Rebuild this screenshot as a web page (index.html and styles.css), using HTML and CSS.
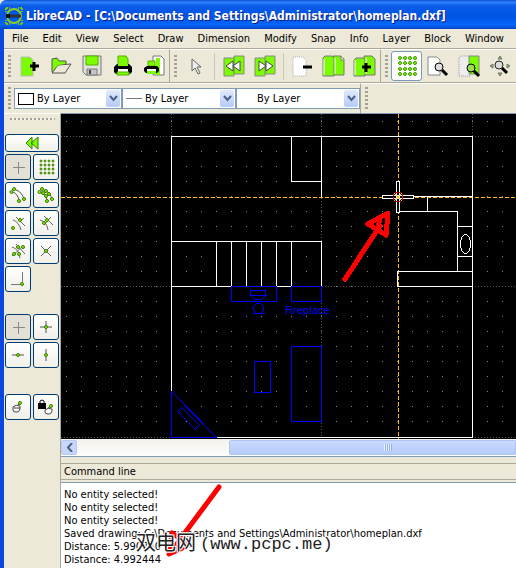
FILE: index.html
```html
<!DOCTYPE html>
<html lang="en">
<head>
    <meta charset="UTF-8">
    <meta name="viewport" content="width=device-width, initial-scale=1.0">
    <title>LibreCAD - [homeplan.dxf]</title>
    <link rel="stylesheet" href="styles.css">
</head>
<body>
    <header class="titlebar">
        <svg class="logo" width="18" height="18" viewBox="0 0 18 18">
            <path d="M1 1v4M1 1h4M17 1v4M17 1h-4M1 17v-4M1 17h4M17 17v-4M17 17h-4" stroke="#7cbd1c" stroke-width="2" stroke-dasharray="2 1"/>
            <circle cx="9" cy="9" r="7" fill="none" stroke="#8fce20" stroke-width="2"/>
            <path d="M1 9h15" stroke="#333" stroke-width="3"/>
            <path d="M1 9h4" stroke="#111" stroke-width="4"/>
        </svg>
        <h1>LibreCAD - [C:\Documents and Settings\Administrator\homeplan.dxf]</h1>
    </header>

    <div class="window">
        <nav class="menu">
            <button>File</button>
            <button>Edit</button>
            <button>View</button>
            <button>Select</button>
            <button>Draw</button>
            <button>Dimension</button>
            <button>Modify</button>
            <button>Snap</button>
            <button>Info</button>
            <button>Layer</button>
            <button>Block</button>
            <button>Window</button>
        </nav>

        <div class="toolbars">
            <div class="toolbar">
                <span class="handle"></span>
                <button class="tool" aria-label="New">
                    <svg width="22" height="22" viewBox="0 0 22 22">
                        <path d="M2 2h9l3 3v16H2z" fill="#7cfc00" stroke="#bbb"/>
                        <path d="M11 11h9M15 7v9" stroke="#000" stroke-width="3"/>
                    </svg>
                </button>
                <button class="tool" aria-label="Open">
                    <svg width="22" height="22" viewBox="0 0 22 22">
                        <path d="M2 17V4l5-1 2 3h7v4" fill="#7cfc00" stroke="#555"/>
                        <path d="M2 18l6-8 13-1-6 9z" fill="#ece9d8" stroke="#555"/>
                        <path d="M3 15V5l4-1 2 3h6v2l-7 1z" fill="#7cfc00"/>
                    </svg>
                </button>
                <button class="tool" aria-label="Save">
                    <svg width="22" height="22" viewBox="0 0 22 22">
                        <path d="M2 1h18v19H5l-3-3z" fill="#e2e2dc" stroke="#777"/>
                        <path d="M5 1h12v9H5z" fill="#7cfc00" stroke="#55ad00"/>
                        <path d="M6 14h10v6H6z" fill="#c5c5c5" stroke="#777"/>
                        <path d="M9 15v4" stroke="#444" stroke-width="2"/>
                    </svg>
                </button>
                <button class="tool" aria-label="Print">
                    <svg width="22" height="22" viewBox="0 0 22 22">
                        <path d="M6 1h8l2 3v6H6z" fill="#7cfc00" stroke="#55ad00"/>
                        <path d="M5 9h12l3 3v5l-2 2H4l-2-2v-5z" fill="#000"/>
                        <path d="M6 9h10v2H6z" fill="#7cfc00"/>
                        <path d="M6 14h10v3H6z" fill="#fff"/>
                        <path d="M5 17h12v3H5z" fill="#7cfc00" stroke="#55ad00"/>
                    </svg>
                </button>
                <button class="tool" aria-label="Print preview">
                    <svg width="22" height="22" viewBox="0 0 22 22">
                        <path d="M10 1h8l3 3v16H10z" fill="#fff" stroke="#777"/>
                        <path d="M13 3h4v17h-4z" fill="#7cfc00"/>
                        <path d="M5 6h7v5H5z" fill="#7cfc00" stroke="#55ad00"/>
                        <path d="M4 11h10l2 2v3l-2 2H3l-2-2v-3z" fill="#000"/>
                        <path d="M4 14h9v2H4z" fill="#fff"/>
                        <path d="M4 16h9v3H4z" fill="#7cfc00"/>
                    </svg>
                </button>
            </div>

            <div class="toolbar">
                <span class="handle"></span>
                <button class="tool" aria-label="Selection pointer">
                    <svg width="22" height="22" viewBox="0 0 22 22">
                        <path d="M7 4v12l3-3 3 6 2-1-3-6h4z" fill="#eee" stroke="#666"/>
                    </svg>
                </button>
                <span class="divider"></span>
                <button class="tool" aria-label="Undo">
                    <svg width="24" height="24" viewBox="0 0 24 24">
                        <path d="M12 2h10v18H12z" fill="#7cfc00" stroke="#888"/>
                        <path d="M2 4h10v18H2z" fill="#7cfc00" stroke="#888"/>
                        <path d="M11 7v10l-7-5zM18 7v10l-7-5z" fill="#fff" stroke="#444"/>
                    </svg>
                </button>
                <button class="tool" aria-label="Redo">
                    <svg width="24" height="24" viewBox="0 0 24 24">
                        <path d="M12 2h10v18H12z" fill="#7cfc00" stroke="#888"/>
                        <path d="M2 4h10v18H2z" fill="#7cfc00" stroke="#888"/>
                        <path d="M6 7v10l7-5zM13 7v10l7-5z" fill="#fff" stroke="#444"/>
                    </svg>
                </button>
                <span class="divider"></span>
                <button class="tool" aria-label="Cut">
                    <svg width="22" height="22" viewBox="0 0 22 22">
                        <path d="M1 2h10l3 3v16H1z" fill="#fff" stroke="#aaa" stroke-dasharray="1 1"/>
                        <path d="M11 12h9" stroke="#000" stroke-width="3"/>
                    </svg>
                </button>
                <button class="tool" aria-label="Copy">
                    <svg width="24" height="24" viewBox="0 0 24 24">
                        <path d="M11 2h8l3 3v16H11z" fill="#7cfc00" stroke="#777"/>
                        <path d="M1 4l2-2h7l2 2v18H1z" fill="#7cfc00" stroke="#777"/>
                        <path d="M13 4v16M2 5v16" stroke="#fff"/>
                        <path d="M19 2v4h3" fill="#fff" stroke="#777"/>
                    </svg>
                </button>
                <button class="tool" aria-label="Paste">
                    <svg width="24" height="24" viewBox="0 0 24 24">
                        <path d="M11 2h8l3 3v16H11z" fill="#7cfc00" stroke="#777"/>
                        <path d="M1 6l2-2h7l2 2v16H1z" fill="#7cfc00" stroke="#777"/>
                        <path d="M13 4v16M2 6v15" stroke="#fff"/>
                        <path d="M9 13h9M13 9v9" stroke="#000" stroke-width="3"/>
                    </svg>
                </button>
            </div>

            <div class="toolbar">
                <span class="handle"></span>
                <button class="tool checked" aria-label="Grid">
                    <svg width="20" height="22" viewBox="0 0 20 22" fill="#7cfc00" stroke="#3c9800">
                        <circle cx="3" cy="3" r="1.5"/><circle cx="8" cy="3" r="1.5"/><circle cx="13" cy="3" r="1.5"/><circle cx="18" cy="3" r="1.5"/>
                        <circle cx="3" cy="8" r="1.5"/><circle cx="8" cy="8" r="1.5"/><circle cx="13" cy="8" r="1.5"/><circle cx="18" cy="8" r="1.5"/>
                        <circle cx="3" cy="14" r="1.5"/><circle cx="8" cy="14" r="1.5"/><circle cx="13" cy="14" r="1.5"/><circle cx="18" cy="14" r="1.5"/>
                        <circle cx="3" cy="19" r="1.5"/><circle cx="8" cy="19" r="1.5"/><circle cx="13" cy="19" r="1.5"/><circle cx="18" cy="19" r="1.5"/>
                    </svg>
                </button>
                <button class="tool" aria-label="Redraw">
                    <svg width="22" height="22" viewBox="0 0 22 22">
                        <path d="M1 2h9l3 3v15H1z" fill="#fff" stroke="#888"/>
                        <circle cx="12" cy="12" r="4" fill="#ddd" stroke="#000"/>
                        <path d="M15 15l5 5" stroke="#000" stroke-width="3"/>
                    </svg>
                </button>
                <button class="tool" aria-label="Zoom page">
                    <svg width="24" height="24" viewBox="0 0 24 24">
                        <path d="M2 4l2-2h9v20H2z" fill="#eee" stroke="#999" stroke-dasharray="1 1"/>
                        <path d="M12 2h10v18H12z" fill="#7cfc00" stroke="#888"/>
                        <circle cx="14" cy="14" r="4" fill="#9d5" stroke="#000"/>
                        <path d="M17 17l5 5" stroke="#000" stroke-width="3"/>
                    </svg>
                </button>
                <button class="tool" aria-label="Auto zoom">
                    <svg width="22" height="22" viewBox="0 0 22 22">
                        <circle cx="10" cy="10" r="4" fill="#ddd" stroke="#222"/>
                        <path d="M13 13l5 5" stroke="#000" stroke-width="3"/>
                        <path d="M11 1l2 3H9zM11 21l2-3H9zM1 11l3-2v4zM21 11l-3-2v4z" fill="#7cbd30" stroke="#777"/>
                    </svg>
                </button>
            </div>
        </div>

        <div class="toolbars pens">
            <div class="toolbar">
                <span class="handle"></span>
                <label class="combo color">
                    <span class="swatch"></span>
                    <select aria-label="Color"><option>By Layer</option></select>
                    <span class="arrow"><svg width="9" height="7" viewBox="0 0 9 7"><path d="M1 1l3.500 4L8 1" fill="none" stroke="#4d6185" stroke-width="2"/></svg></span>
                </label>
                <label class="combo width">
                    <span class="stroke"></span>
                    <select aria-label="Line width"><option>By Layer</option></select>
                    <span class="arrow"><svg width="9" height="7" viewBox="0 0 9 7"><path d="M1 1l3.500 4L8 1" fill="none" stroke="#4d6185" stroke-width="2"/></svg></span>
                </label>
                <label class="combo type">
                    <select aria-label="Line type"><option>By Layer</option></select>
                    <span class="arrow"><svg width="9" height="7" viewBox="0 0 9 7"><path d="M1 1l3.500 4L8 1" fill="none" stroke="#4d6185" stroke-width="2"/></svg></span>
                </label>
            </div>
            <div class="toolbar">
                <span class="handle"></span>
            </div>
        </div>

        <div class="main">
            <aside class="dock">
                <span class="handle across"></span>
                <button class="snap back" aria-label="Back">
                    <svg width="14" height="14" viewBox="0 0 14 14">
                        <path d="M7 1v12L1 7zM13 1v12L6 7z" fill="#7cfc00" stroke="#3a7a10"/>
                    </svg>
                </button>
                <div class="snaps">
                    <button class="snap pressed" aria-label="Free snap">
                        <svg width="18" height="18" viewBox="0 0 18 18"><path d="M9.500 4v12M4 9.500h12" stroke="#888"/></svg>
                    </button>
                    <button class="snap" aria-label="Snap to grid">
                        <svg width="18" height="18" viewBox="0 0 18 18" fill="#7cfc00" stroke="#3c7800">
                            <circle cx="4" cy="3" r="1"/><circle cx="8" cy="3" r="1"/><circle cx="12" cy="3" r="1"/><circle cx="16" cy="3" r="1"/>
                            <circle cx="4" cy="7" r="1"/><circle cx="8" cy="7" r="1"/><circle cx="12" cy="7" r="1"/><circle cx="16" cy="7" r="1"/>
                            <circle cx="4" cy="11" r="1"/><circle cx="8" cy="11" r="1"/><circle cx="12" cy="11" r="1"/><circle cx="16" cy="11" r="1"/>
                            <circle cx="4" cy="15" r="1"/><circle cx="8" cy="15" r="1"/><circle cx="12" cy="15" r="1"/><circle cx="16" cy="15" r="1"/>
                        </svg>
                    </button>
                    <button class="snap" aria-label="Snap to endpoints">
                        <svg width="18" height="18" viewBox="0 0 18 18">
                            <path d="M5 3q9 3 10 11M3 6q6 1 7 9" fill="none" stroke="#555"/>
                            <g fill="#7cfc00" stroke="#3c7800"><circle cx="5" cy="3" r="1.500"/><circle cx="2.500" cy="6" r="1.500"/><circle cx="10" cy="15" r="1.500"/><circle cx="15" cy="13" r="1.500"/></g>
                        </svg>
                    </button>
                    <button class="snap" aria-label="Snap on entity">
                        <svg width="18" height="18" viewBox="0 0 18 18">
                            <path d="M5 3q9 3 10 11M3 6q6 1 7 9" fill="none" stroke="#555"/>
                            <g fill="#7cfc00" stroke="#3c7800"><circle cx="5" cy="3" r="1.500"/><circle cx="2.500" cy="6" r="1.500"/><circle cx="6" cy="7" r="1.500"/><circle cx="9" cy="5" r="1.500"/><circle cx="9" cy="10" r="1.500"/><circle cx="12" cy="8" r="1.500"/><circle cx="10" cy="15" r="1.500"/><circle cx="15" cy="13" r="1.500"/></g>
                        </svg>
                    </button>
                    <button class="snap" aria-label="Snap to center">
                        <svg width="18" height="18" viewBox="0 0 18 18">
                            <path d="M7 3l9 9M4 6q6 2 8 10M10 8l5-4" fill="none" stroke="#666"/>
                            <g fill="#7cfc00" stroke="#3c7800"><circle cx="11" cy="6" r="1.500"/><circle cx="4" cy="14" r="1.500"/></g>
                        </svg>
                    </button>
                    <button class="snap" aria-label="Snap to middle">
                        <svg width="18" height="18" viewBox="0 0 18 18">
                            <path d="M7 2l9 9M3 6q7 2 8 10M7 11l7-8" fill="none" stroke="#666"/>
                            <g fill="#7cfc00" stroke="#3c7800"><circle cx="10" cy="6" r="1.500"/><circle cx="7" cy="9" r="1.500"/></g>
                        </svg>
                    </button>
                    <button class="snap" aria-label="Snap to distance">
                        <svg width="18" height="18" viewBox="0 0 18 18">
                            <path d="M3 5q7 2 8 11M7 2l9 10M3 14L14 4" fill="none" stroke="#666"/>
                            <g fill="#7cfc00" stroke="#3c7800"><circle cx="9" cy="5" r="1.500"/><circle cx="14" cy="5" r="1.500"/><circle cx="5" cy="12" r="1.500"/><circle cx="10" cy="12" r="1.500"/></g>
                        </svg>
                    </button>
                    <button class="snap" aria-label="Snap to intersection">
                        <svg width="18" height="18" viewBox="0 0 18 18">
                            <path d="M4 4l10 10M14 4L4 14" stroke="#666"/>
                            <circle cx="9" cy="9" r="1.500" fill="#7cfc00" stroke="#3c7800"/>
                        </svg>
                    </button>
                    <button class="snap" aria-label="Snap to corner">
                        <svg width="18" height="18" viewBox="0 0 18 18">
                            <path d="M2 14.500h9M13.500 2v10" stroke="#777"/>
                            <circle cx="13" cy="14" r="1.500" fill="#7cfc00" stroke="#3c7800"/>
                        </svg>
                    </button>
                </div>
                <div class="snaps">
                    <button class="snap pressed" aria-label="Restrict nothing">
                        <svg width="18" height="18" viewBox="0 0 18 18"><path d="M9.500 4v12M4 9.500h12" stroke="#888"/></svg>
                    </button>
                    <button class="snap" aria-label="Restrict orthogonal">
                        <svg width="18" height="18" viewBox="0 0 18 18">
                            <path d="M9 3v12M3 9h12" stroke="#555"/>
                            <circle cx="9" cy="9" r="1.500" fill="#7cfc00" stroke="#3c7800"/>
                        </svg>
                    </button>
                    <button class="snap" aria-label="Restrict horizontal">
                        <svg width="18" height="18" viewBox="0 0 18 18">
                            <path d="M3 9h12" stroke="#555"/>
                            <circle cx="9" cy="9" r="1.500" fill="#7cfc00" stroke="#3c7800"/>
                        </svg>
                    </button>
                    <button class="snap" aria-label="Restrict vertical">
                        <svg width="18" height="18" viewBox="0 0 18 18">
                            <path d="M9 3v12" stroke="#555"/>
                            <circle cx="9" cy="9" r="1.500" fill="#7cfc00" stroke="#3c7800"/>
                        </svg>
                    </button>
                </div>
                <div class="snaps">
                    <button class="snap" aria-label="Set relative zero">
                        <svg width="18" height="18" viewBox="0 0 18 18">
                            <path d="M4 9q3-3 7-1v3q-1 4-4 3-3 0-3-2zM8 8l3-3M5 10h6" fill="#fff" stroke="#444"/>
                            <circle cx="11" cy="5" r="1.500" fill="#7cfc00" stroke="#3c7800"/>
                        </svg>
                    </button>
                    <button class="snap" aria-label="Lock relative zero">
                        <svg width="18" height="18" viewBox="0 0 18 18">
                            <path d="M3 6V3q2-2 4 0v3" fill="none" stroke="#000"/>
                            <path d="M1 5h8v6H1z"/>
                            <path d="M8 12q3-3 7-1v2q-1 4-4 3-3 0-3-2zM11 10l3-2" fill="#fff" stroke="#444"/>
                            <circle cx="14" cy="8" r="1.500" fill="#7cfc00" stroke="#3c7800"/>
                        </svg>
                    </button>
                </div>
            </aside>

            <div class="work">
                <div class="canvas">
                    <svg class="drawing" width="100%" height="100%" shape-rendering="crispEdges">
                        <defs>
                            <pattern id="gridLeft" x="5" y="7" width="15" height="15" patternUnits="userSpaceOnUse">
                                <path d="M0 0h1v1H0z" fill="#888"/>
                            </pattern>
                            <pattern id="gridRight" x="6" y="7" width="15" height="15" patternUnits="userSpaceOnUse">
                                <path d="M0 0h1v1H0z" fill="#888"/>
                            </pattern>
                        </defs>
                        <rect width="300" height="320" fill="url(#gridLeft)"/>
                        <rect x="300" width="100%" height="320" fill="url(#gridRight)"/>
                        
                        <g transform="translate(-61 -114)" fill="none">
                            <path d="M171.500 114v324M321.500 114v324M472.500 114v324M61 136.500h1000M61 286.500h1000M61 437.500h1000" stroke="#555" stroke-dasharray="1 2"/>
                            <path d="M61 197.500h2000M398.500 114v1000" stroke="#ffbf00" stroke-dasharray="4 2"/>
                            <g stroke="#fff">
                                <path d="M171.500 391V136.500h301v301H216"/>
                                <path d="M291.500 136v45.500h30M321.500 136v61"/>
                                <path d="M171 241.500h150.500v45M171 286.500h151M216.500 241v45M231.500 241v45M246.500 241v45M261.500 241v45M276.500 241v45M291.500 241v45"/>
                                <path d="M414 196.500h58M427.500 197v14M400 211.500h57.500v60M457 226.500h15M457 256.500h15M472 271.500h-74.500v15h75"/>
                                <ellipse cx="465.500" cy="244" rx="5" ry="9.500"/>
                            </g>
                            <g stroke="#00f">
                                <path d="M231.500 286.500h45v15h-45zM291.500 286.500h30v15h-30z"/>
                                <path d="M250.500 290.500h15v5l-4 4h-7l-4-4zM250 295.500h17"/>
                                <path d="M256.500 303.500h4l3 3v4l-3 3h-4l-3-3v-4zM253 313.500h12"/>
                                <path d="M254.500 361.500h16v31h-16zM291.500 346.500h30v75h-30z"/>
                                <path d="M171.500 391.500v46h45zM177.500 411.500l4-4 18 18-4 4z"/>
                            </g>
                            <text class="note" x="285" y="314">Fireplace</text>
                            <g fill="#000" stroke="#fff">
                                <path d="M382.500 195.500h31v3h-31zM396.500 181.500h3v31h-3z"/>
                            </g>
                            <circle cx="398" cy="197" r="5" stroke="#e00" stroke-dasharray="3 1"/>
                            <path d="M394 193l8 8M402 193l-8 8" stroke="#ffbf00"/>
                            <path d="M345 279l35-53M388 213l-20 11 18 11zM380 220l-3 9" stroke="#f00" stroke-width="5" stroke-linecap="round" stroke-linejoin="round"/>
                        </g>
                    </svg>
                </div>
                <div class="scrollbar">
                    <button class="scroll-left" aria-label="Scroll left">
                        <svg width="7" height="9" viewBox="0 0 7 9"><path d="M6 0L2 4.500 6 9" fill="none" stroke="#4d6185" stroke-width="2"/></svg>
                    </button>
                    <div class="thumb"><span class="grip"></span></div>
                </div>

                <section class="command">
                    <h2><label for="log">Command line</label></h2>
                    <textarea id="log" rows="6" readonly>No entity selected!
No entity selected!
No entity selected!
Saved drawing: C:\Documents and Settings\Administrator\homeplan.dxf
Distance: 5.990740
Distance: 4.992444</textarea>
                    <svg class="pointer" width="64" height="80" viewBox="0 0 64 80">
                        <path d="M58 5L20 56M11 51l-3 21 20-9zM12 68l8-12" fill="none" stroke="#f00" stroke-width="5" stroke-linecap="round" stroke-linejoin="round"/>
                    </svg>
                    <p class="site"><span lang="zh">双电网</span>(www.pcpc.me)</p>
                </section>
            </div>
        </div>
    </div>
</body>
</html>
```

FILE: styles.css
```css
* {
    box-sizing: border-box;
}
body {
    margin: 0;
    height: 100vh;
    display: flex;
    flex-direction: column;
    overflow: hidden;
    background-color: #ece9d8;
    font-family: "DejaVu Sans Condensed", "Noto Sans", sans-serif;
    font-size: 11px;
    color: #000;
}
button, select, textarea {
    font: inherit;
    color: inherit;
    margin: 0;
    padding: 0;
    border: none;
    background: none;
}
svg {
    display: block;
    flex-shrink: 0;
}

/* title */
.titlebar {
    height: 29px;
    flex-shrink: 0;
    display: flex;
    align-items: center;
    gap: 3px;
    padding: 2px 5px 0;
    border-top-left-radius: 6px;
    background: linear-gradient(#0a4fd0 0, #2c83fb 8%, #0a5be8 20%, #0055e5 60%, #0566fa 85%, #0043c8 100%);
}
.titlebar h1 {
    margin: 0;
    font-size: 12px;
    font-weight: bold;
    color: #fff;
    white-space: nowrap;
    text-shadow: 1px 1px 0 #0a1883;
}
.window {
    flex: 1;
    min-height: 0;
    display: flex;
    flex-direction: column;
    border-left: 4px solid #0a46e0;
}

/* menu */
.menu {
    display: flex;
    height: 20px;
    flex-shrink: 0;
    padding-left: 1px;
    border-bottom: 1px solid #aca899;
}
.menu button {
    padding: 0 7px;
    white-space: nowrap;
}

/* toolbars */
.toolbars {
    display: flex;
    height: 34px;
    flex-shrink: 0;
    border-bottom: 1px solid #aca899;
}
.toolbars.pens {
    height: 30px;
    border-bottom: none;
}
.toolbar {
    display: flex;
    align-items: center;
    flex-shrink: 0;
    padding-left: 4px;
    border-top: 1px solid #fff;
    border-right: 1px solid #aca899;
}
.toolbar:last-child {
    flex: 1;
    border-right: none;
}
.handle {
    width: 3px;
    height: 23px;
    margin-right: 3px;
    background: repeating-linear-gradient(#a5a293 0 2px, #ece9d8 2px 4px);
}
.handle.across {
    width: auto;
    height: 2px;
    margin: 4px 5px 14px;
    background: repeating-linear-gradient(90deg, #a5a293 0 2px, #f6f4ec 2px 4px);
}
.tool {
    width: 31px;
    height: 30px;
    display: flex;
    align-items: center;
    justify-content: center;
}
.tool.checked {
    background-color: #fff;
    border: 1px solid #7b98bb;
    border-radius: 3px;
}
.divider {
    width: 1px;
    height: 27px;
    margin: 0 3px;
    background-color: #cbc7b8;
}
.combo {
    display: flex;
    align-items: center;
    gap: 3px;
    height: 21px;
    padding: 1px 1px 1px 3px;
    border: 1px solid #7f9db9;
    background-color: #fff;
}
.combo select {
    flex: 1;
    appearance: none;
    outline: none;
}
.combo.color {
    width: 108px;
}
.combo.width {
    width: 114px;
}
.combo.type {
    width: 124px;
    padding-left: 20px;
}
.swatch {
    width: 16px;
    height: 12px;
    border: 1px solid #000;
}
.stroke {
    width: 16px;
    height: 1px;
    background-color: #777;
}
.arrow {
    display: flex;
    align-items: center;
    justify-content: center;
    width: 14px;
    height: 17px;
    border-radius: 2px;
    background: linear-gradient(#e1eafe, #b4caf7);
}

/* snap dock */
.main {
    flex: 1;
    min-height: 0;
    display: flex;
}
.dock {
    width: 56px;
    flex-shrink: 0;
    padding-left: 1px;
    display: flex;
    flex-direction: column;
    border-top: 1px solid #fff;
}
.snap {
    height: 26px;
    display: flex;
    align-items: center;
    justify-content: center;
    border: 1px solid #003c74;
    border-radius: 3px;
    background: linear-gradient(#fff, #f0efe8);
}
.snap.back {
    height: 18px;
    margin: 0 1px 2px 0;
}
.snap.pressed {
    background: #e3e1d6;
}
.snaps {
    display: grid;
    grid-template-columns: 26px 26px;
    gap: 2px;
    margin-bottom: 22px;
}
.snaps + .snaps {
    margin-bottom: 26px;
}

/* drawing area */
.work {
    flex: 1;
    min-width: 0;
    display: flex;
    flex-direction: column;
    border-left: 1px solid #aca899;
}
.canvas {
    flex: 1;
    min-height: 0;
    border-top: 1px solid #7f9db9;
    background-color: #000;
    overflow: hidden;
}
.note {
    fill: #00f;
    font-family: "DejaVu Sans", sans-serif;
    font-size: 10px;
}
.scrollbar {
    display: flex;
    height: 18px;
    flex-shrink: 0;
    padding: 1px 0;
    background: linear-gradient(#f3f1ec, #fefefb);
    border-bottom: 1px solid #7f9db9;
}
.scroll-left {
    width: 16px;
    display: flex;
    align-items: center;
    justify-content: center;
    border: 1px solid #b4c8f0;
    border-radius: 2px;
    background-color: #c8d6fb;
}
.thumb {
    flex: 1;
    margin-left: 152px;
    padding-left: 154px;
    display: flex;
    align-items: center;
    border: 1px solid #b0c4f4;
    border-radius: 2px 0 0 2px;
    background: linear-gradient(#cbdafe, #b5cbf8);
}
.grip {
    width: 8px;
    height: 7px;
    background: repeating-linear-gradient(90deg, #eef4fe 0 1px, #8cb0f8 1px 2px);
}

/* command line */
.command {
    position: relative;
    flex-shrink: 0;
    padding-top: 6px;
}
.command h2 {
    margin: 0 0 2px;
    padding-left: 3px;
    font-size: 11px;
    font-weight: normal;
    line-height: 15px;
    border-top: 1px solid #aca899;
    border-bottom: 1px solid #aca899;
}
.command textarea {
    display: block;
    width: 100%;
    padding: 5px 3px 2px;
    line-height: 13px;
    border-top: 1px solid #7f9db9;
    background-color: #fff;
    resize: none;
    outline: none;
    overflow: hidden;
}
.pointer {
    position: absolute;
    left: 100px;
    bottom: 6px;
}
.site {
    position: absolute;
    left: 75px;
    bottom: 10px;
    margin: 0;
    display: flex;
    align-items: center;
    gap: 4px;
    font-family: "Liberation Mono", "Noto Sans CJK SC", monospace;
    font-size: 17px;
    line-height: 26px;
    white-space: nowrap;
    color: #222;
    text-shadow: 1px 1px 0 #fff, -1px -1px 0 #fff, 1px -1px 0 #fff, -1px 1px 0 #fff;
}
.site span {
    font-size: 20px;
}
```
